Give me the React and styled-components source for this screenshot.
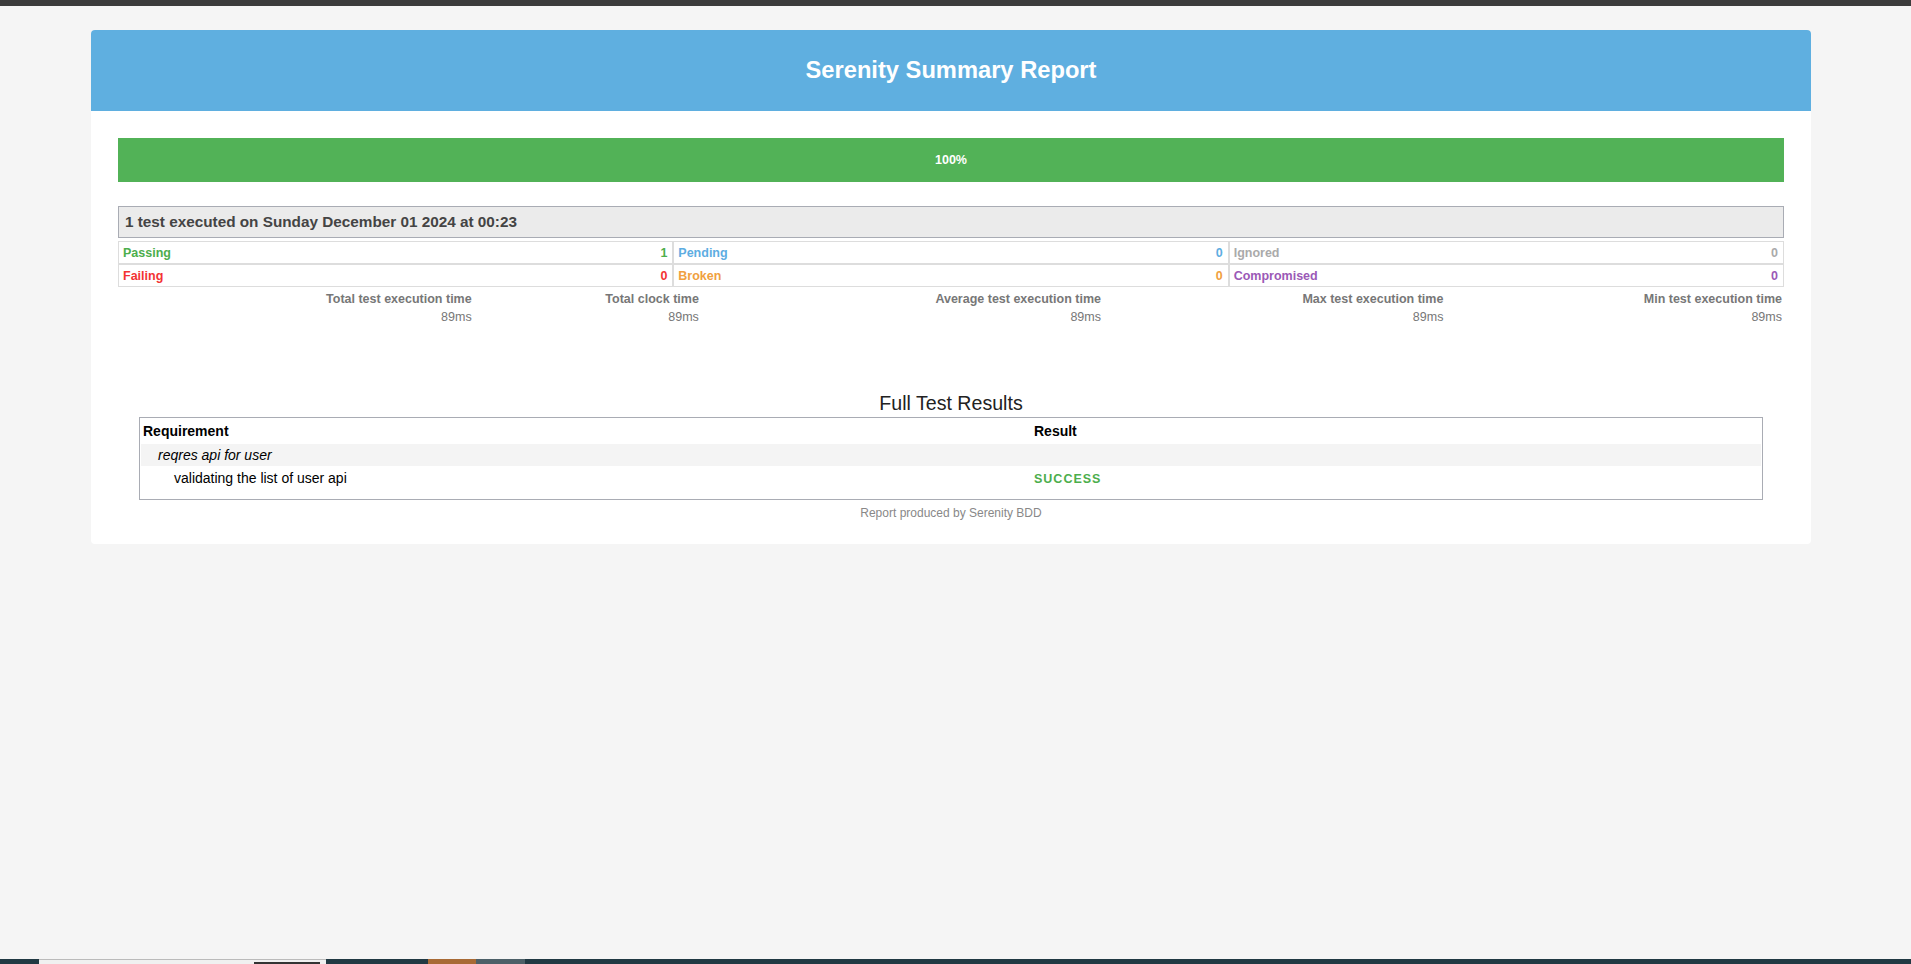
import React from 'react';
import styled, { createGlobalStyle } from 'styled-components';

const GlobalStyle = createGlobalStyle`
  html, body {
    margin: 0;
    padding: 0;
    background: #f5f5f5;
    font-family: "Liberation Sans", Arial, sans-serif;
  }
`;

const Page = styled.div`
  min-height: 964px;
  display: flex;
  flex-direction: column;
`;

const TopBar = styled.div`
  height: 6px;
  background: #3c3c3c;
`;

const Main = styled.div`
  flex: 1;
  padding: 24px 0 0 91px;
`;

const Card = styled.div`
  width: 1720px;
  background: #fff;
  border-radius: 4px;
`;

const Header = styled.div`
  height: 81px;
  background: #5fafe0;
  border-radius: 4px 4px 0 0;
  display: flex;
  align-items: center;
  justify-content: center;
  h1 {
    margin: 0;
    color: #fff;
    font-size: 23.7px;
    font-weight: bold;
  }
`;

const Body = styled.div`
  padding: 27px 27px 24px;
`;

const Progress = styled.div`
  height: 44px;
  background: #52b257;
  color: #fff;
  font-size: 12.5px;
  font-weight: bold;
  display: flex;
  align-items: center;
  justify-content: center;
`;

const SummaryTitle = styled.div`
  margin-top: 24px;
  height: 30px;
  border: 1px solid #a9acb4;
  background: #ebebeb;
  color: #444;
  font-size: 15.3px;
  font-weight: bold;
  display: flex;
  align-items: center;
  padding-left: 6px;
`;

const Counts = styled.div`
  margin-top: 3px;
  display: grid;
  grid-template-columns: repeat(3, 1fr);
`;

const CountCell = styled.div`
  height: 21px;
  border: 1px solid #dddddd;
  display: flex;
  align-items: center;
  justify-content: space-between;
  padding: 0 5px 0 4px;
  font-size: 12.5px;
  font-weight: bold;
  color: ${p => p.color};
`;

const Stats = styled.table`
  width: 100%;
  margin-top: 3px;
  border-collapse: collapse;
  color: #777;
  font-size: 12.5px;
  td {
    text-align: right;
    padding: 0;
    height: 18px;
    white-space: nowrap;
  }
  td:last-child {
    padding-right: 2px;
  }
  tr:first-child td {
    font-weight: bold;
  }
`;

const ResultsTitle = styled.h2`
  margin: 66px 0 0;
  text-align: center;
  font-size: 19.6px;
  font-weight: normal;
  line-height: 23px;
  color: #222;
`;

const ResultsBox = styled.div`
  margin: 2px 21px 0 21px;
  border: 1px solid #a9acb4;
  padding: 0 1px 10px;
`;

const ResultsTable = styled.table`
  width: 100%;
  border-collapse: collapse;
  font-size: 14px;
  color: #000;
  th {
    text-align: left;
    font-weight: bold;
    height: 26px;
    padding: 0 0 0 2px;
  }
`;

const Row = styled.tr`
  background: ${p => (p.$group ? '#f4f4f4' : 'transparent')};
  td {
    height: ${p => (p.$group ? 22 : 23)}px;
    padding: 0 0 0 ${p => p.$indent}px;
    font-style: ${p => (p.$group ? 'italic' : 'normal')};
  }
`;

const Success = styled.span`
  color: #4cae4c;
  font-weight: bold;
  font-size: 12.5px;
  letter-spacing: 1px;
`;

const Footer = styled.div`
  margin-top: 6px;
  text-align: center;
  font-size: 12px;
  line-height: 14px;
  color: #888;
`;

const Taskbar = styled.div`
  height: 5px;
  display: flex;
  background: #213943;
`;

const TaskSlot = styled.div`
  width: ${p => p.w}px;
  background: ${p => p.bg};
  border-top: ${p => (p.light ? '1px solid #bbb' : 'none')};
  display: flex;
  justify-content: flex-end;
  align-items: flex-end;
  padding-right: ${p => (p.light ? 6 : 0)}px;
  box-sizing: border-box;
`;

const TaskInner = styled.div`
  width: 66px;
  height: 2px;
  background: #333;
`;

const counts = [
  { label: 'Passing', value: 1, color: '#4cae4c' },
  { label: 'Pending', value: 0, color: '#5dade2' },
  { label: 'Ignored', value: 0, color: '#aaaaaa' },
  { label: 'Failing', value: 0, color: '#f33333' },
  { label: 'Broken', value: 0, color: '#f0a040' },
  { label: 'Compromised', value: 0, color: '#9b59b6' },
];

const stats = [
  'Total test execution time',
  'Total clock time',
  'Average test execution time',
  'Max test execution time',
  'Min test execution time',
];

export default function App() {
  return (
    <Page>
      <GlobalStyle />
      <TopBar />
      <Main>
        <Card>
          <Header>
            <h1>Serenity Summary Report</h1>
          </Header>
          <Body>
            <Progress>100%</Progress>
            <SummaryTitle>1 test executed on Sunday December 01 2024 at 00:23</SummaryTitle>
            <Counts>
              {counts.map(c => (
                <CountCell key={c.label} color={c.color}>
                  <span>{c.label}</span>
                  <span>{c.value}</span>
                </CountCell>
              ))}
            </Counts>
            <Stats>
              <tbody>
                <tr>
                  {stats.map(s => (
                    <td key={s}>{s}</td>
                  ))}
                </tr>
                <tr>
                  {stats.map(s => (
                    <td key={s}>89ms</td>
                  ))}
                </tr>
              </tbody>
            </Stats>
            <ResultsTitle>Full Test Results</ResultsTitle>
            <ResultsBox>
              <ResultsTable>
                <thead>
                  <tr>
                    <th style={{ width: '55%' }}>Requirement</th>
                    <th>Result</th>
                  </tr>
                </thead>
                <tbody>
                  <Row $group $indent={17}>
                    <td>reqres api for user</td>
                    <td></td>
                  </Row>
                  <Row $indent={33}>
                    <td>validating the list of user api</td>
                    <td style={{ paddingLeft: 2 }}>
                      <Success>SUCCESS</Success>
                    </td>
                  </Row>
                </tbody>
              </ResultsTable>
            </ResultsBox>
            <Footer>Report produced by Serenity BDD</Footer>
          </Body>
        </Card>
      </Main>
      <Taskbar>
        <TaskSlot w={39} bg="#213943" />
        <TaskSlot w={287} bg="#f0f0f0" light>
          <TaskInner />
        </TaskSlot>
        <TaskSlot w={102} bg="#213943" />
        <TaskSlot w={48} bg="#a86a35" />
        <TaskSlot w={49} bg="#4d6068" />
      </Taskbar>
    </Page>
  );
}
